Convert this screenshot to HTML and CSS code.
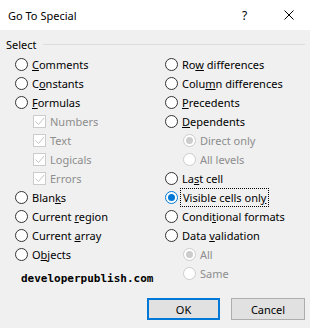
FILE: index.html
```html
<!DOCTYPE html>
<html lang="en">
  <head>
    <meta charset="UTF-8" />
    <title>Go To Special</title>
    <link rel="stylesheet" href="styles.css">
  </head>
  <body>
    <div class="titlebar">
      <span class="title">Go To Special</span>
      <span class="help">?</span>
      <svg class="close" width="10" height="10" viewBox="0 0 10 10">
        <path d="M0.5 0.5 L9.5 9.5 M9.5 0.5 L0.5 9.5" stroke="#000" stroke-width="1" fill="none" />
      </svg>
    </div>

    <div class="group-head">
      <span>Select</span>
      <span class="rule"></span>
    </div>

    <div class="cols">
      <div class="col">
        <div class="row"><span class="radio"></span><span><u>C</u>omments</span></div>
        <div class="row"><span class="radio"></span><span>C<u>o</u>nstants</span></div>
        <div class="row"><span class="radio"></span><span><u>F</u>ormulas</span></div>
        <div class="row sub off"><span class="check">
          <svg width="11" height="11" viewBox="0 0 11 11"><path d="M1.5 5.5 L4.5 8.5 L10 2" stroke="#c4c4c4" fill="none" /></svg>
        </span><span>Numbers</span></div>
        <div class="row sub off"><span class="check">
          <svg width="11" height="11" viewBox="0 0 11 11"><path d="M1.5 5.5 L4.5 8.5 L10 2" stroke="#c4c4c4" fill="none" /></svg>
        </span><span>Text</span></div>
        <div class="row sub off"><span class="check">
          <svg width="11" height="11" viewBox="0 0 11 11"><path d="M1.5 5.5 L4.5 8.5 L10 2" stroke="#c4c4c4" fill="none" /></svg>
        </span><span>Logicals</span></div>
        <div class="row sub off"><span class="check">
          <svg width="11" height="11" viewBox="0 0 11 11"><path d="M1.5 5.5 L4.5 8.5 L10 2" stroke="#c4c4c4" fill="none" /></svg>
        </span><span>Errors</span></div>
        <div class="row"><span class="radio"></span><span>Blan<u>k</u>s</span></div>
        <div class="row"><span class="radio"></span><span>Current <u>r</u>egion</span></div>
        <div class="row"><span class="radio"></span><span>Current <u>a</u>rray</span></div>
        <div class="row"><span class="radio"></span><span>O<u>b</u>jects</span></div>
        <div class="brand">developerpublish.com</div>
      </div>

      <div class="col">
        <div class="row"><span class="radio"></span><span>Ro<u>w</u> differences</span></div>
        <div class="row"><span class="radio"></span><span>Colu<u>m</u>n differences</span></div>
        <div class="row"><span class="radio"></span><span><u>P</u>recedents</span></div>
        <div class="row"><span class="radio"></span><span><u>D</u>ependents</span></div>
        <div class="row sub off"><span class="radio on"></span><span>Direct only</span></div>
        <div class="row sub off"><span class="radio"></span><span>All levels</span></div>
        <div class="row"><span class="radio"></span><span>La<u>s</u>t cell</span></div>
        <div class="row"><span class="radio on"></span><span class="focus">Visible cells onl<u>y</u></span></div>
        <div class="row"><span class="radio"></span><span>Condi<u>t</u>ional formats</span></div>
        <div class="row"><span class="radio"></span><span>Data <u>v</u>alidation</span></div>
        <div class="row sub off"><span class="radio on"></span><span>All</span></div>
        <div class="row sub off"><span class="radio"></span><span>Same</span></div>
      </div>
    </div>

    <div class="buttons">
      <button class="btn default">OK</button>
      <button class="btn">Cancel</button>
    </div>
  </body>
</html>
```

FILE: styles.css
```css
body {
  margin: 0;
  width: 310px;
  height: 328px;
  overflow: hidden;
  background: #f0f0f0;
  font-family: "Noto Sans", sans-serif;
  font-size: 11px;
  color: #000;
}

.titlebar {
  height: 30px;
  background: #fff;
  display: flex;
  align-items: center;
  padding-left: 8px;
}

.title {
  flex: 1;
  font-size: 11px;
}

.help {
  width: 8px;
  margin-right: 34px;
  font-size: 12px;
}

.close {
  margin-right: 16px;
}

.group-head {
  display: flex;
  align-items: center;
  height: 16px;
  margin-top: 6px;
  padding: 0 5px 0 6px;
  gap: 6px;
}

.rule {
  flex: 1;
  height: 1px;
  background: #dcdcdc;
}

.cols {
  display: grid;
  grid-template-columns: 150px 150px;
  padding-left: 15px;
  margin-top: 3px;
  height: 231px;
}

.row {
  height: 19px;
  display: flex;
  align-items: center;
  gap: 4px;
  white-space: nowrap;
}

.row u {
  text-underline-offset: 1px;
}

.row.sub {
  padding-left: 18px;
}

.row.off {
  color: #8d8d8d;
}

.radio {
  box-sizing: border-box;
  width: 13px;
  height: 13px;
  border: 1px solid #333;
  border-radius: 50%;
  background: #fff;
  display: flex;
  align-items: center;
  justify-content: center;
}

.radio.on {
  border-color: #0078d7;
}

.radio.on:after {
  content: "";
  width: 7px;
  height: 7px;
  border-radius: 50%;
  background: #0078d7;
}

.off .radio {
  border-color: #cccccc;
}

.off .radio.on:after {
  background: #cccccc;
}

.check {
  box-sizing: border-box;
  width: 13px;
  height: 13px;
  border: 1px solid #cccccc;
  background: #fff;
  display: flex;
  align-items: center;
  justify-content: center;
}

.focus {
  outline: 1px dotted #000;
  outline-offset: 1px;
  padding: 0 1px;
}

.brand {
  margin: 8px 0 0 6px;
  height: 14px;
  line-height: 14px;
  font-family: "DejaVu Sans Mono", monospace;
  font-weight: bold;
  font-size: 11px;
}

.buttons {
  display: flex;
  justify-content: flex-end;
  gap: 11px;
  padding-right: 5px;
  margin-top: 12px;
}

.btn {
  box-sizing: border-box;
  height: 22px;
  width: 74px;
  background: #e1e1e1;
  border: 1px solid #adadad;
  font-family: "Noto Sans", sans-serif;
  font-size: 11px;
  color: #000;
  padding: 0;
}

.btn.default {
  width: 73px;
  border: 2px solid #0078d7;
}
```
